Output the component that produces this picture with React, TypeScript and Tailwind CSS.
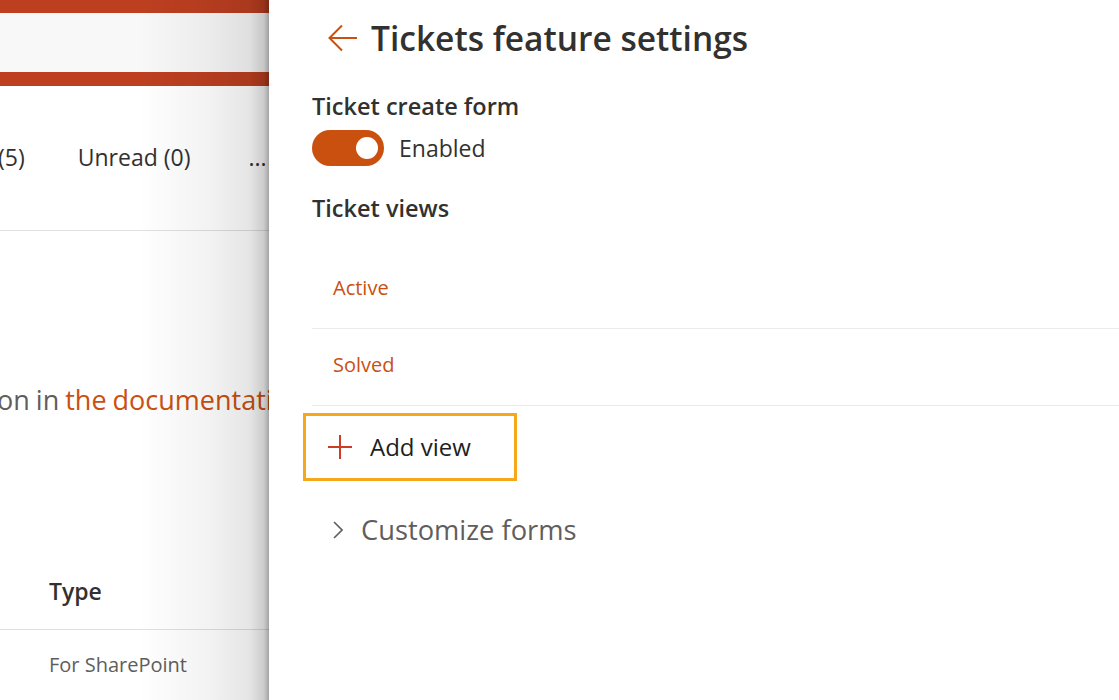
export default function App() {
  const font = { fontFamily: '"Open Sans", "Noto Sans", sans-serif' };
  return (
    <div className="flex w-[1119px] h-[700px] overflow-hidden bg-white text-[#323130]" style={font}>
      {/* Background page (dimmed, behind the panel) */}
      <div className="relative w-[269px] shrink-0 overflow-hidden flex flex-col">
        <div className="h-[13px] bg-[#bd3f20]" />
        <div className="h-[59px] bg-[#f8f8f8]" />
        <div className="h-[14px] bg-[#bd3f20]" />
        <div className="h-[145px] border-b border-[#e1dfdd] flex items-center whitespace-nowrap text-[23px] leading-[32px] pb-[2px]">
          <span className="-ml-[2px]">(5)</span>
          <span className="ml-[53px]">Unread (0)</span>
          <span className="ml-[58px]">...</span>
        </div>
        <div className="mt-[151px] -ml-[3px] whitespace-nowrap text-[27px] leading-[36px] text-[#605e5c] [word-spacing:-1px]">
          on in <span className="text-[#ca5010]">the documentation</span>
        </div>
        <div className="mt-[157px] pl-[49px] pb-[22px] border-b border-[#e1dfdd] text-[23px] leading-[32px] font-semibold">
          Type
        </div>
        <div className="mt-[21px] pl-[49px] text-[20px] leading-[28px] text-[#605e5c] whitespace-nowrap">
          For SharePoint
        </div>
        {/* panel shadow over background */}
        <div className="absolute inset-y-0 right-0 w-[130px] bg-[linear-gradient(to_right,rgba(0,0,0,0)_0%,rgba(0,0,0,0.05)_55%,rgba(0,0,0,0.1)_85%,rgba(0,0,0,0.2)_96%,rgba(0,0,0,0.36)_100%)]" />
      </div>

      {/* Settings panel */}
      <div className="flex-1 flex flex-col bg-white">
        <div className="h-[75px] flex items-center pl-[59px]">
          <svg width="30" height="28" viewBox="0 0 30 28" fill="none" stroke="#ca5010" strokeWidth="2">
            <path d="M29 14H2" />
            <path d="M14 1.5L1.5 14L14 26.5" strokeLinejoin="miter" />
          </svg>
          <h1 className="ml-[13px] text-[33.5px] leading-[44px] font-semibold text-[#323130] whitespace-nowrap">
            Tickets feature settings
          </h1>
        </div>
        <div className="flex flex-col pl-[43px]">
          <div className="mt-[15px] text-[23.5px] leading-[32px] font-semibold">Ticket create form</div>
          <div className="mt-[8px] flex items-center">
            <div className="w-[72px] h-[36px] rounded-full bg-[#ca5010] flex items-center justify-end pr-[6px]">
              <div className="w-[22px] h-[22px] rounded-full bg-white" />
            </div>
            <span className="ml-[15px] text-[23px] leading-[32px]">Enabled</span>
          </div>
          <div className="mt-[26px] text-[23.5px] leading-[32px] font-semibold">Ticket views</div>
          <div className="mt-[28px] flex flex-col">
            <div className="h-[77px] border-b border-[#edebe9] flex items-center pb-[4px] pl-[21px] text-[20px] text-[#ca5010]">
              Active
            </div>
            <div className="h-[77px] border-b border-[#edebe9] flex items-center pb-[4px] pl-[21px] text-[20px] text-[#ca5010]">
              Solved
            </div>
          </div>
          <div className="mt-[7px] -ml-[9px] w-[214px] h-[68px] border-[3px] border-[#f7a81a] flex items-center pl-[22px]">
            <svg width="24" height="24" viewBox="0 0 24 24" stroke="#cc3d24" strokeWidth="2" fill="none">
              <path d="M12 0V24M0 12H24" />
            </svg>
            <span className="ml-[18px] text-[24px] leading-[32px] text-[#201f1e]">Add view</span>
          </div>
          <div className="mt-[31px] flex items-center pl-[21px]">
            <svg width="10" height="18" viewBox="0 0 10 18" fill="none" stroke="#605e5c" strokeWidth="1.6">
              <path d="M1 1L9 9L1 17" />
            </svg>
            <span className="ml-[18px] text-[27.3px] leading-[36px] text-[#605e5c] whitespace-nowrap">Customize forms</span>
          </div>
        </div>
      </div>
    </div>
  );
}
